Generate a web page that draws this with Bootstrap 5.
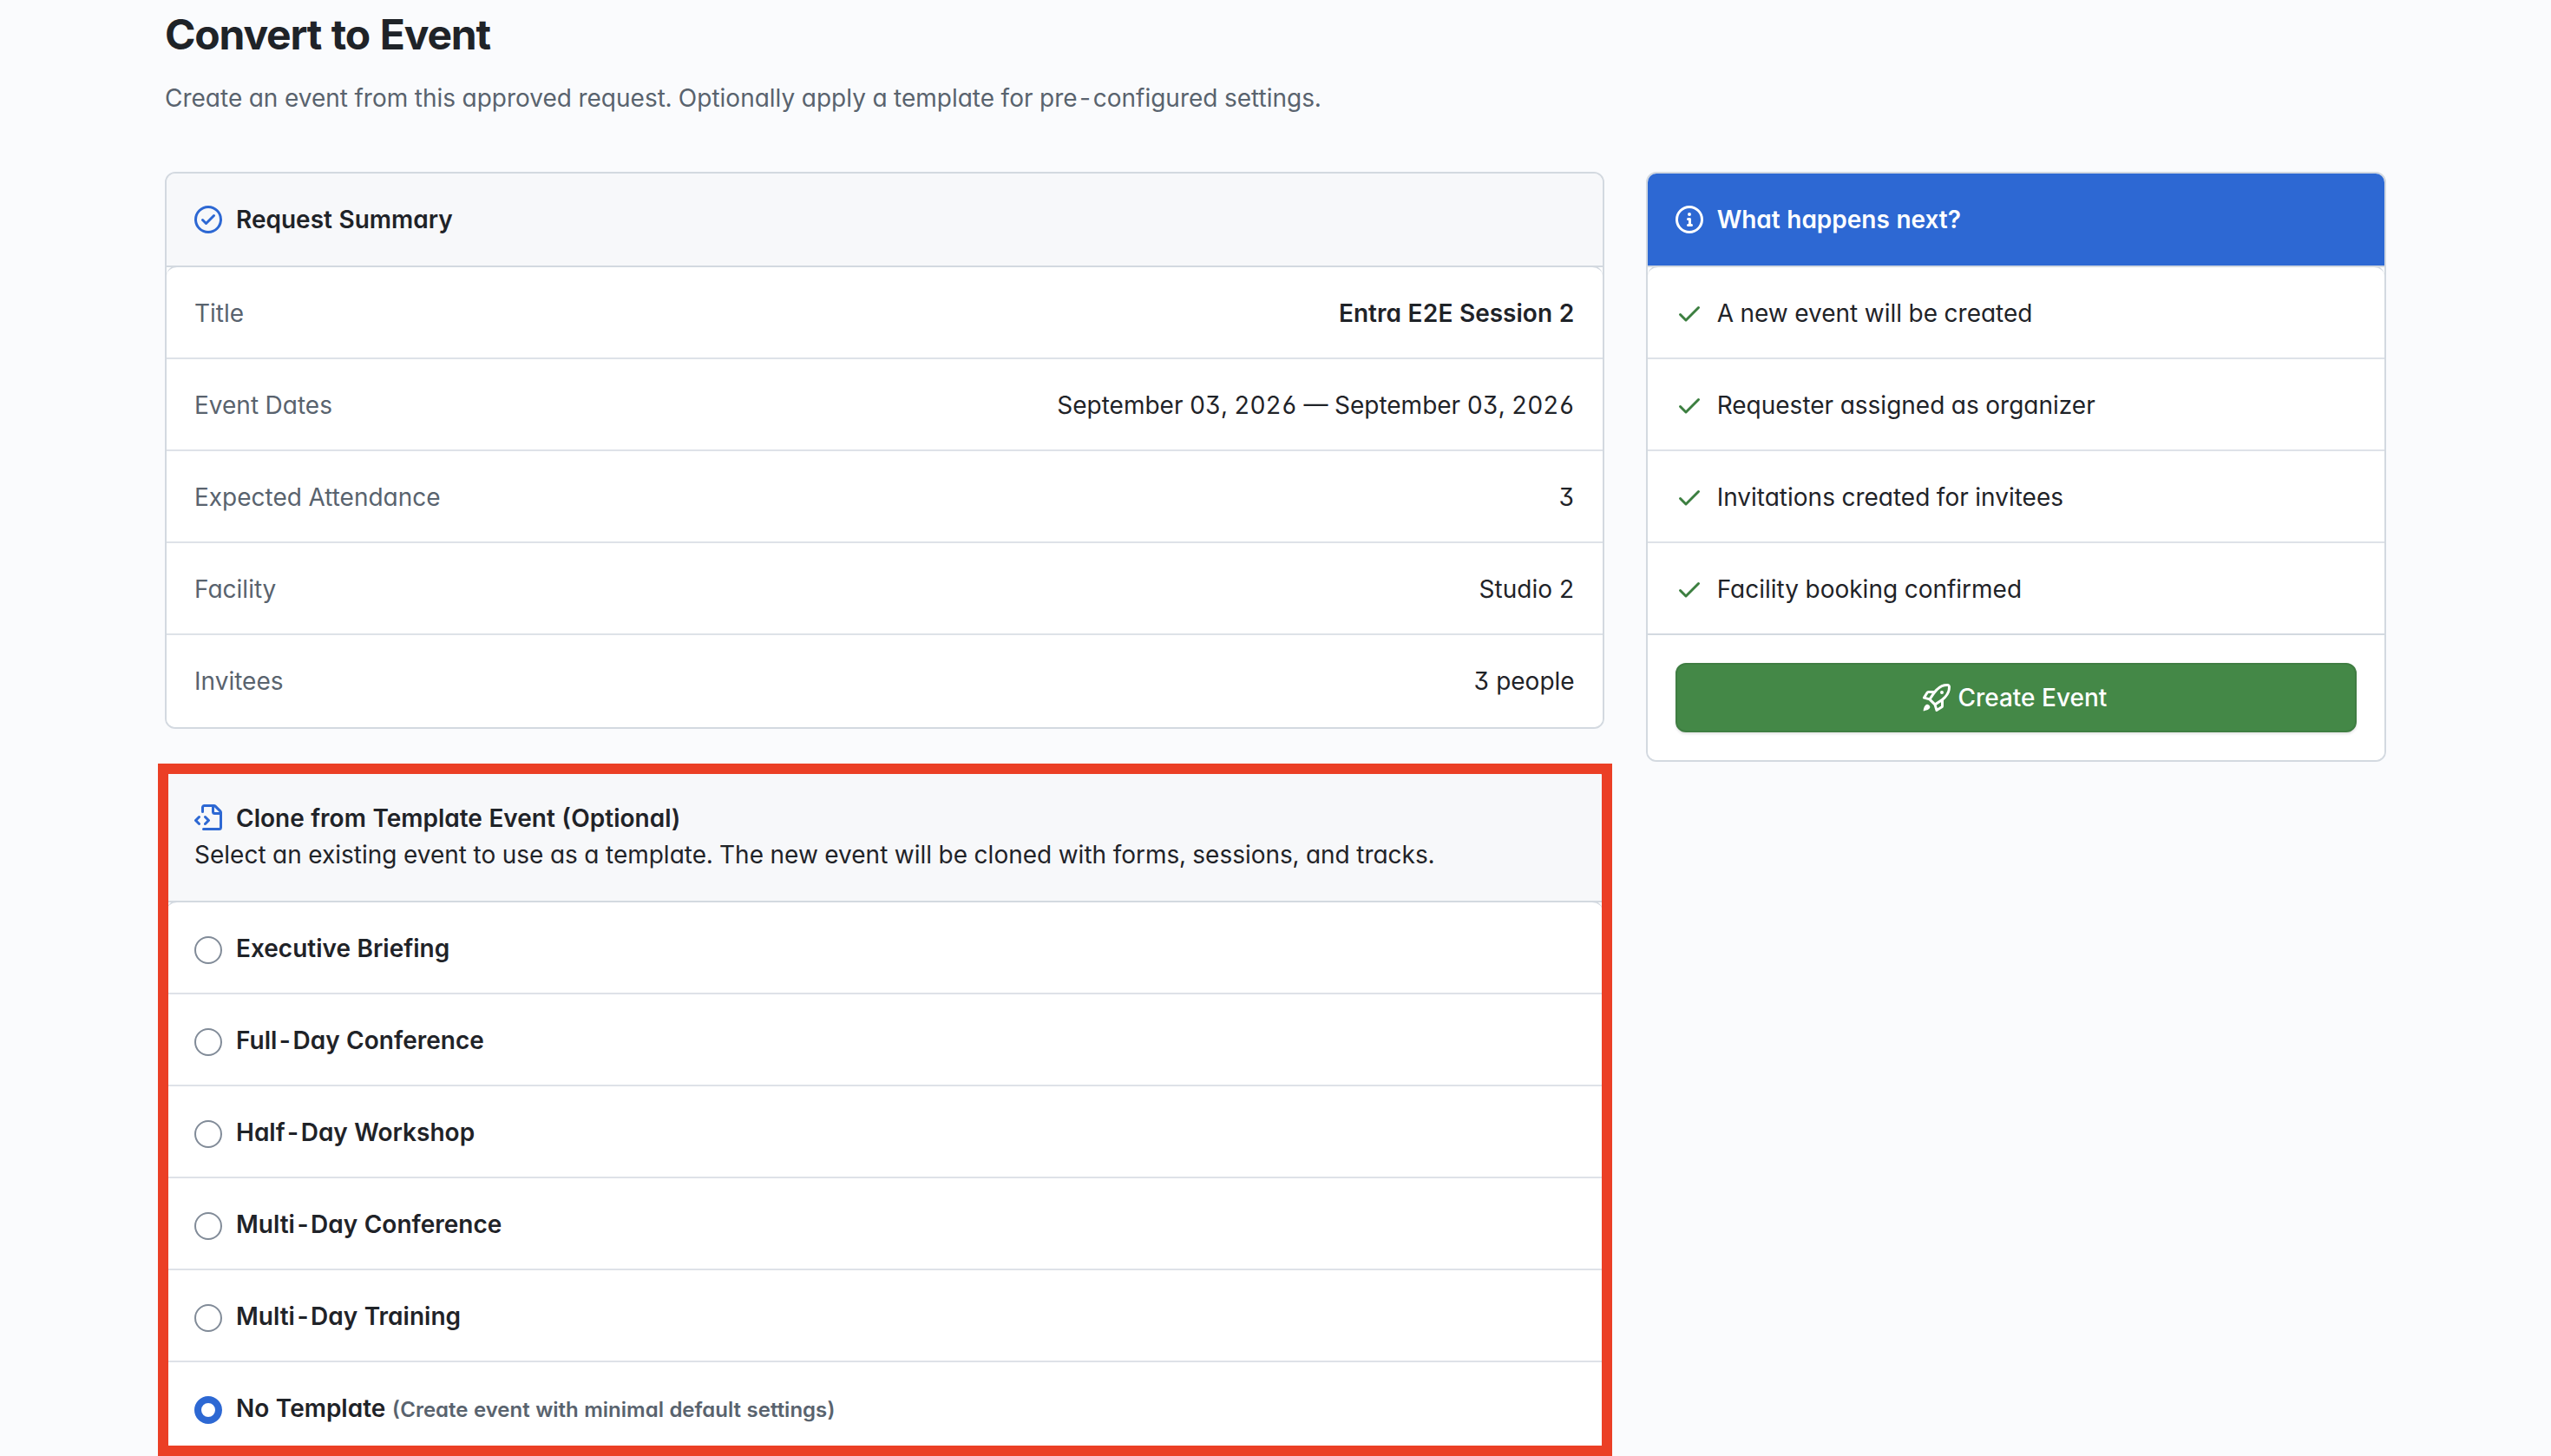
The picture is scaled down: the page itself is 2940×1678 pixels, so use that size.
<!DOCTYPE html>
<html lang="en">
<head>
<meta charset="utf-8">
<title>Convert to Event</title>
<link href="https://cdn.jsdelivr.net/npm/bootstrap@5.3.0/dist/css/bootstrap.min.css" rel="stylesheet">
<style>
  body { background: #fafbfd; color: #1f2328; font-family: Inter, "Liberation Sans", sans-serif; font-size: 28px; line-height: 40px; font-feature-settings: "tnum", "cv03", "cv04", "cv09", "cv11"; height: 1678px; overflow: hidden; }
  .page { width: 2560px; margin-left: 190px; padding-top: 12px; }
  .page-heading { font-size: 48px; line-height: 56px; font-weight: 700; letter-spacing: -1.2px; margin: 0 0 25px; }
  .subtle { color: #59636e; }
  .page-intro { margin: 0 0 65px; }
  .main-col { padding-right: 48px; }
  .card { --bs-card-border-color: #d3d9e0; --bs-card-border-width: 2px; --bs-card-border-radius: 12px; --bs-card-inner-border-radius: 10px; color: inherit; }
  .card-header { background: #f7f8fa; padding: 32px; border-bottom: 2px solid #d3d9e0; line-height: 42px; }
  .card-header.blue { background: #2d68d3; color: #fff; }
  .heading-row { font-weight: 600; gap: 16px; font-size: 28px; line-height: 42px; margin: 0; }
  .list-group { --bs-list-group-border-color: #dee2e8; --bs-list-group-border-width: 2px; --bs-list-group-item-padding-x: 32px; --bs-list-group-color: #1f2328; }
  .list-group-item { height: 106px; line-height: 42px; padding-top: 32px; padding-bottom: 30px; }
  .list-group-item:first-child::before { content: ""; position: absolute; left: 0; right: 0; top: -2px; height: 20px; border-top: 2px solid #d3d9e0; border-radius: 12px 12px 0 0; pointer-events: none; }
  .oct { width: 32px; height: 32px; fill: currentColor; flex: none; }
  .blue-ink { color: #2d68d3; }
  .green-ink { color: #3c7f40; }
  .steps .list-group-item { gap: 16px; }
  .steps .list-group-item:last-child { height: 104px; }
  .card-footer { background: #fff; border-top: 2px solid #d3d9e0; padding: 32px; }
  .btn-create { height: 80px; background: #448847; border: 2px solid #3f7d42; border-radius: 12px; color: #fff; font-size: 28px; font-weight: 500; gap: 8px; padding-right: 14px; box-shadow: 0 2px 3px rgba(31,35,40,.12); }
  .template-wrap { position: relative; margin-top: 46px; }
  .template-wrap .card-header { padding-top: 33px; padding-bottom: 32px; }
  .template-wrap .heading-row { line-height: 44px; margin-bottom: -1px; }
  .form-check-input { width: 32px; height: 32px; margin: 7px 0 0; border: 2px solid #818b98; flex: none; }
  .form-check-input:checked { background: #fff; border: 8px solid #2d68d3; }
  .choice { gap: 16px; font-weight: 600; }
  .choice small { font-size: 24px; color: #59636e; }
  .marker { position: absolute; left: -8px; right: -9px; top: -6px; height: 798px; border: 12px solid #eb3f25; pointer-events: none; }
</style>
</head>
<body>
<svg class="d-none">
  <symbol id="i-check" viewBox="0 0 16 16"><path d="M13.78 4.22a.75.75 0 0 1 0 1.06l-7.25 7.25a.75.75 0 0 1-1.06 0L2.22 9.28a.751.751 0 0 1 .018-1.042.751.751 0 0 1 1.042-.018L6 10.94l6.72-6.72a.75.75 0 0 1 1.06 0Z"/></symbol>
</svg>
<main class="page">
  <h1 class="page-heading">Convert to Event</h1>
  <p class="page-intro subtle">Create an event from this approved request. Optionally apply a template for pre-configured settings.</p>
  <div class="row g-0 align-items-start">
    <div class="col-8 main-col">
      <section class="card">
        <div class="card-header">
          <h2 class="heading-row d-flex align-items-center"><svg class="oct blue-ink" viewBox="0 0 16 16"><path d="M0 8a8 8 0 1 1 16 0A8 8 0 0 1 0 8Zm1.5 0a6.5 6.5 0 1 0 13 0 6.5 6.5 0 0 0-13 0Zm10.28-1.72-4.5 4.5a.75.75 0 0 1-1.06 0l-2-2a.751.751 0 0 1 .018-1.042.751.751 0 0 1 1.042-.018l1.47 1.47 3.97-3.97a.751.751 0 0 1 1.042.018.751.751 0 0 1 .018 1.042Z"/></svg><span>Request Summary</span></h2>
        </div>
        <div class="list-group list-group-flush">
          <div class="list-group-item d-flex justify-content-between"><span class="subtle">Title</span><span class="fw-semibold">Entra E2E Session 2</span></div>
          <div class="list-group-item d-flex justify-content-between"><span class="subtle">Event Dates</span><span>September 03, 2026 — September 03, 2026</span></div>
          <div class="list-group-item d-flex justify-content-between"><span class="subtle">Expected Attendance</span><span>3</span></div>
          <div class="list-group-item d-flex justify-content-between"><span class="subtle">Facility</span><span>Studio 2</span></div>
          <div class="list-group-item d-flex justify-content-between"><span class="subtle">Invitees</span><span>3 people</span></div>
        </div>
      </section>
      <div class="template-wrap">
        <section class="card">
          <div class="card-header">
            <h2 class="heading-row d-flex align-items-center"><svg class="oct blue-ink" viewBox="0 0 16 16"><path d="M4 1.75C4 .784 4.784 0 5.75 0h5.586c.464 0 .909.184 1.237.513l2.914 2.914c.329.328.513.773.513 1.237v8.586A1.75 1.75 0 0 1 14.25 15h-9a.75.75 0 0 1 0-1.5h9a.25.25 0 0 0 .25-.25V6h-2.75A1.75 1.75 0 0 1 10 4.25V1.5H5.75a.25.25 0 0 0-.25.25v2.5a.75.75 0 0 1-1.5 0Zm1.72 4.97a.75.75 0 0 1 1.06 0l2 2a.75.75 0 0 1 0 1.06l-2 2a.749.749 0 0 1-1.275-.326.749.749 0 0 1 .215-.734l1.47-1.47-1.47-1.47a.75.75 0 0 1 0-1.06ZM3.28 7.78 1.81 9.25l1.47 1.47a.751.751 0 0 1-.018 1.042.751.751 0 0 1-1.042.018l-2-2a.75.75 0 0 1 0-1.06l2-2a.751.751 0 0 1 1.042.018.751.751 0 0 1 .018 1.042Zm8.22-6.218V4.25c0 .138.112.25.25.25h2.688l-.011-.013-2.914-2.914-.013-.011Z"/></svg><span>Clone from Template Event (Optional)</span></h2>
            <div>Select an existing event to use as a template. The new event will be cloned with forms, sessions, and tracks.</div>
          </div>
          <div class="list-group list-group-flush">
            <label class="list-group-item choice d-flex"><input class="form-check-input" type="radio" name="tpl"><span>Executive Briefing</span></label>
            <label class="list-group-item choice d-flex"><input class="form-check-input" type="radio" name="tpl"><span>Full-Day Conference</span></label>
            <label class="list-group-item choice d-flex"><input class="form-check-input" type="radio" name="tpl"><span>Half-Day Workshop</span></label>
            <label class="list-group-item choice d-flex"><input class="form-check-input" type="radio" name="tpl"><span>Multi-Day Conference</span></label>
            <label class="list-group-item choice d-flex"><input class="form-check-input" type="radio" name="tpl"><span>Multi-Day Training</span></label>
            <label class="list-group-item choice d-flex"><input class="form-check-input" type="radio" name="tpl" checked><span>No Template <small>(Create event with minimal default settings)</small></span></label>
          </div>
        </section>
        <div class="marker"></div>
      </div>
    </div>
    <div class="col-4">
      <section class="card">
        <div class="card-header blue">
          <h2 class="heading-row d-flex align-items-center"><svg class="oct" viewBox="0 0 16 16"><path d="M0 8a8 8 0 1 1 16 0A8 8 0 0 1 0 8Zm8-6.5a6.5 6.5 0 1 0 0 13 6.5 6.5 0 0 0 0-13ZM6.5 7.75A.75.75 0 0 1 7.25 7h1a.75.75 0 0 1 .75.75v2.75h.25a.75.75 0 0 1 0 1.5h-2a.75.75 0 0 1 0-1.5h.25v-2h-.25a.75.75 0 0 1-.75-.75ZM8 6a1 1 0 1 1 0-2 1 1 0 0 1 0 2Z"/></svg><span>What happens next?</span></h2>
        </div>
        <div class="list-group list-group-flush steps">
          <div class="list-group-item d-flex align-items-center"><svg class="oct green-ink"><use href="#i-check"/></svg><span>A new event will be created</span></div>
          <div class="list-group-item d-flex align-items-center"><svg class="oct green-ink"><use href="#i-check"/></svg><span>Requester assigned as organizer</span></div>
          <div class="list-group-item d-flex align-items-center"><svg class="oct green-ink"><use href="#i-check"/></svg><span>Invitations created for invitees</span></div>
          <div class="list-group-item d-flex align-items-center"><svg class="oct green-ink"><use href="#i-check"/></svg><span>Facility booking confirmed</span></div>
        </div>
        <div class="card-footer">
          <button class="btn btn-create w-100 d-flex align-items-center justify-content-center" type="button"><svg class="oct" viewBox="0 0 16 16"><path d="M14.064 0h.186C15.216 0 16 .784 16 1.75v.186a8.752 8.752 0 0 1-2.564 6.186l-.458.459c-.314.314-.641.616-.979.904v3.207c0 .608-.315 1.172-.833 1.49l-2.774 1.707a.749.749 0 0 1-1.11-.418l-.954-3.102a1.214 1.214 0 0 1-.145-.125L3.754 9.816a1.218 1.218 0 0 1-.124-.145L.528 8.717a.749.749 0 0 1-.418-1.11l1.71-2.774A1.748 1.748 0 0 1 3.31 4h3.204c.288-.338.59-.665.904-.979l.459-.458A8.749 8.749 0 0 1 14.064 0ZM8.938 3.623h-.002l-.458.458c-.76.76-1.437 1.598-2.02 2.5l-1.5 2.317 2.143 2.143 2.317-1.5c.902-.583 1.74-1.26 2.499-2.02l.459-.458a7.25 7.25 0 0 0 2.123-5.127V1.75a.25.25 0 0 0-.25-.25h-.186a7.249 7.249 0 0 0-5.125 2.123ZM3.56 14.56c-.732.732-2.334 1.045-3.005 1.148a.234.234 0 0 1-.201-.064.234.234 0 0 1-.064-.201c.103-.671.416-2.273 1.15-3.003a1.502 1.502 0 1 1 2.12 2.12Zm6.94-3.935c-.088.06-.177.118-.266.175l-2.35 1.521.548 1.783 1.949-1.2a.25.25 0 0 0 .119-.213ZM3.678 8.116 5.2 5.766c.058-.09.117-.178.176-.266H3.309a.25.25 0 0 0-.213.119l-1.2 1.95ZM12 5a1 1 0 1 1-2 0 1 1 0 0 1 2 0Z"/></svg><span>Create Event</span></button>
        </div>
      </section>
    </div>
  </div>
</main>
<script src="https://cdn.jsdelivr.net/npm/bootstrap@5.3.0/dist/js/bootstrap.bundle.min.js"></script>
</body>
</html>
